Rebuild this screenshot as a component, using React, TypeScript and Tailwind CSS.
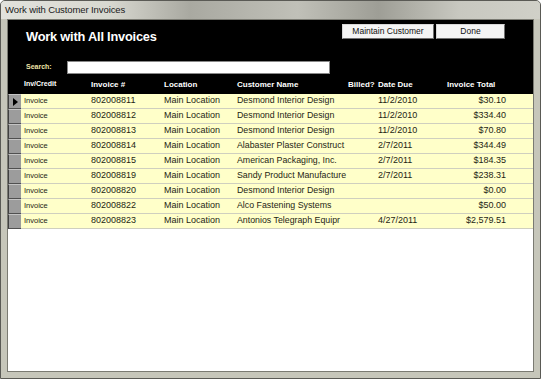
import React from "react";

const rows = [
  ["Invoice", "802008811", "Main Location", "Desmond Interior Design", "", "11/2/2010", "$30.10"],
  ["Invoice", "802008812", "Main Location", "Desmond Interior Design", "", "11/2/2010", "$334.40"],
  ["Invoice", "802008813", "Main Location", "Desmond Interior Design", "", "11/2/2010", "$70.80"],
  ["Invoice", "802008814", "Main Location", "Alabaster Plaster Construct", "", "2/7/2011", "$344.49"],
  ["Invoice", "802008815", "Main Location", "American Packaging, Inc.", "", "2/7/2011", "$184.35"],
  ["Invoice", "802008819", "Main Location", "Sandy Product Manufacture", "", "2/7/2011", "$238.31"],
  ["Invoice", "802008820", "Main Location", "Desmond Interior Design", "", "", "$0.00"],
  ["Invoice", "802008822", "Main Location", "Alco Fastening Systems", "", "", "$50.00"],
  ["Invoice", "802008823", "Main Location", "Antonios Telegraph Equipr", "", "4/27/2011", "$2,579.51"],
];

const grid = "grid grid-cols-[67px_73px_73px_111px_30px_60px_68px] pl-[3px]";

export default function App() {
  return (
    <div
      className="w-[541px] h-[379px] flex flex-col bg-[#c6c6ba] border border-[#5a5a55] rounded-t-[5px] overflow-hidden"
      style={{ fontFamily: '"Liberation Sans", Arial, sans-serif' }}
    >
      <div className="h-[18px] flex items-center pl-[4px] bg-[linear-gradient(90deg,#e2e2dc_0%,#d8d8d0_20%,#a9a9a1_35%,#c0c0b8_55%,#9e9e96_70%,#c8c8c0_85%,#d0d0c8_100%)]">
        <span className="text-[9.5px] text-[#1a1a1a] tracking-[-0.1px]">Work with Customer Invoices</span>
      </div>
      <div className="flex-1 mx-[6px] mb-[6px] bg-white flex flex-col border border-[#7a7a72]">
        <div className="bg-black h-[74px] flex flex-col">
          <div className="flex items-start h-[36px]">
            <div className="pl-[18px] pt-[7px] text-white font-bold text-[12.8px] tracking-[-0.2px]">
              Work with All Invoices
            </div>
            <div className="ml-auto mr-[28px] mt-[4px] flex gap-[2px]">
              <button className="w-[92px] h-[15px] bg-[#f4f4f4] border border-[#d8d8d8] border-r-[#707070] border-b-[#707070] text-[8.5px] leading-[13px] text-[#111]">
                Maintain Customer
              </button>
              <button className="w-[69px] h-[15px] bg-[#f4f4f4] border border-[#d8d8d8] border-r-[#707070] border-b-[#707070] text-[8.5px] leading-[13px] text-[#111]">
                Done
              </button>
            </div>
          </div>
          <div className="flex items-center h-[18px] mt-[2px]">
            <span className="pl-[18px] w-[59px] text-[7px] font-bold text-[#f0e4a8]">Search:</span>
            <div className="w-[263px] h-[13px] bg-white border border-[#888]" />
          </div>
          <div className="flex items-center h-[18px] pl-[13px] text-white font-bold text-[8px]">
            <div className={grid + " w-full"}>
              <span className="text-[7px]">Inv/Credit</span>
              <span>Invoice #</span>
              <span>Location</span>
              <span>Customer Name</span>
              <span>Billed?</span>
              <span>Date Due</span>
              <span className="pl-[9px]">Invoice Total</span>
            </div>
          </div>
        </div>
        {rows.map((r, i) => (
          <div key={i} className="flex h-[15px]">
            <div className="w-[13px] bg-[#9c9c9c] border-l border-l-[#404040] border-b border-b-[#505050] border-t border-t-[#c4c4c4] flex items-center justify-center">
              {i === 0 && (
                <svg width="5" height="8" viewBox="0 0 5 8">
                  <path d="M0 0 L5 4 L0 8 Z" fill="#000" />
                </svg>
              )}
            </div>
            <div className={grid + " flex-1 bg-[#ffffc9] border-b border-b-[#cfcfbf] items-center text-[9px] text-[#1e1e14]"}>
              <span className="text-[7.5px]">{r[0]}</span>
              <span>{r[1]}</span>
              <span>{r[2]}</span>
              <span className="whitespace-nowrap text-[8.8px]">{r[3]}</span>
              <span>{r[4]}</span>
              <span>{r[5]}</span>
              <span className="text-right">{r[6]}</span>
            </div>
          </div>
        ))}
        <div className="flex-1 bg-white" />
      </div>
    </div>
  );
}
